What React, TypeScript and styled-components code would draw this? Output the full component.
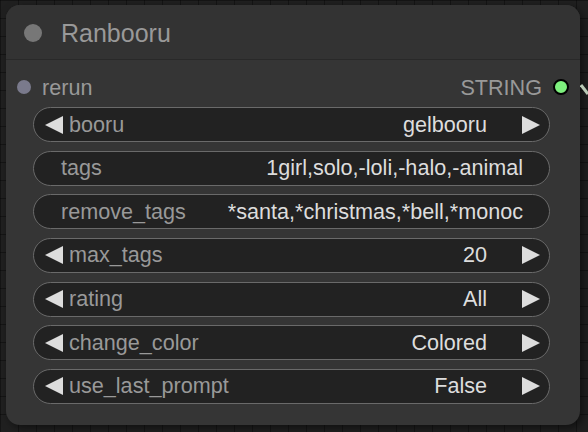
import React from "react";
import styled, { createGlobalStyle } from "styled-components";

const Global = createGlobalStyle`
  html, body { margin: 0; padding: 0; }
  body {
    width: 588px;
    height: 432px;
    overflow: hidden;
    background-color: #202020;
    background-image:
      linear-gradient(to right, rgba(0,0,0,0.35) 1px, transparent 1px),
      linear-gradient(to bottom, rgba(0,0,0,0.35) 1px, transparent 1px);
    background-size: 18px 18px;
    font-family: "Liberation Sans", Arial, sans-serif;
  }
`;

const Canvas = styled.div`
  position: relative;
  width: 588px;
  height: 432px;
  padding: 5px 0 0 6px;
  box-sizing: border-box;
`;

const Node = styled.div`
  width: 574px;
  height: 420px;
  box-sizing: border-box;
  background: #353535;
  border-radius: 14px;
  box-shadow: 3px 3px 8px rgba(0, 0, 0, 0.5);
  display: flex;
  flex-direction: column;
  overflow: hidden;
`;

const TitleBar = styled.div`
  height: 55px;
  box-sizing: border-box;
  display: flex;
  align-items: center;
  padding-left: 18px;
  background: #333333;
  border-bottom: 1px solid #292929;
`;

const TitleDot = styled.span`
  width: 18px;
  height: 18px;
  border-radius: 50%;
  background: #777777;
  margin-top: 1px;
`;

const TitleText = styled.span`
  margin-left: 19px;
  color: #999999;
  font-size: 25px;
  line-height: 1;
  margin-top: 3px;
`;

const Body = styled.div`
  display: flex;
  flex-direction: column;
  padding: 16px 30px 0 27px;
`;

const SlotRow = styled.div`
  height: 22px;
  margin: 0 -19px 0 -16px;
  display: flex;
  align-items: center;
  justify-content: space-between;
  font-size: 21.6px;
  color: #999999;
`;

const SlotSide = styled.div`
  display: flex;
  align-items: center;
  gap: 11px;
`;

const SlotText = styled.span`
  margin-top: 2px;
`;

const InputDot = styled.span`
  width: 14px;
  height: 14px;
  border-radius: 50%;
  background: #7a7a8c;
`;

const OutputDot = styled.span`
  width: 12px;
  height: 12px;
  border-radius: 50%;
  background: #7ef07e;
  border: 2px solid #000;
`;

const WidgetList = styled.div`
  margin-top: 9px;
  display: flex;
  flex-direction: column;
  gap: 8.67px;
`;

const Widget = styled.div<{ $combo?: boolean }>`
  height: 35px;
  box-sizing: border-box;
  border: 1.5px solid #6a6a6a;
  border-radius: 18px;
  background: #222222;
  display: flex;
  align-items: center;
  padding: ${(p) => (p.$combo ? "0 9px 0 11px" : "0 26px 0 27px")};
  font-size: 21.6px;
  white-space: nowrap;
  overflow: hidden;
`;

const Arrow = styled.svg`
  width: 18px;
  height: 18px;
  flex: none;
  fill: #dddddd;
`;

const Label = styled.span<{ $combo?: boolean }>`
  color: #999999;
  margin-left: ${(p) => (p.$combo ? "6px" : "0")};
`;

const Value = styled.span<{ $combo?: boolean }>`
  color: #dddddd;
  margin-left: auto;
  margin-right: ${(p) => (p.$combo ? "35px" : "0")};
`;

const Link = styled.svg`
  position: absolute;
  left: 580px;
  top: 80px;
  width: 8px;
  height: 20px;
`;

const LeftArrow = () => (
  <Arrow viewBox="0 0 18 18">
    <polygon points="18,0 0,9 18,18" />
  </Arrow>
);

const RightArrow = () => (
  <Arrow viewBox="0 0 18 18">
    <polygon points="0,0 18,9 0,18" />
  </Arrow>
);

type W = { label: string; value: string; combo: boolean };

const widgets: W[] = [
  { label: "booru", value: "gelbooru", combo: true },
  { label: "tags", value: "1girl,solo,-loli,-halo,-animal", combo: false },
  { label: "remove_tags", value: "*santa,*christmas,*bell,*monoc", combo: false },
  { label: "max_tags", value: "20", combo: true },
  { label: "rating", value: "All", combo: true },
  { label: "change_color", value: "Colored", combo: true },
  { label: "use_last_prompt", value: "False", combo: true },
];

export default function App() {
  return (
    <>
      <Global />
      <Canvas>
        <Node>
          <TitleBar>
            <TitleDot />
            <TitleText>Ranbooru</TitleText>
          </TitleBar>
          <Body>
            <SlotRow>
              <SlotSide>
                <InputDot />
                <SlotText>rerun</SlotText>
              </SlotSide>
              <SlotSide>
                <SlotText>STRING</SlotText>
                <OutputDot />
              </SlotSide>
            </SlotRow>
            <WidgetList>
              {widgets.map((w) => (
                <Widget key={w.label} $combo={w.combo}>
                  {w.combo && <LeftArrow />}
                  <Label $combo={w.combo}>{w.label}</Label>
                  <Value $combo={w.combo}>{w.value}</Value>
                  {w.combo && <RightArrow />}
                </Widget>
              ))}
            </WidgetList>
          </Body>
        </Node>
        <Link viewBox="0 0 8 20">
          <path d="M1 5 L8 14" stroke="#b9c9b5" strokeWidth="3" fill="none" />
        </Link>
      </Canvas>
    </>
  );
}
